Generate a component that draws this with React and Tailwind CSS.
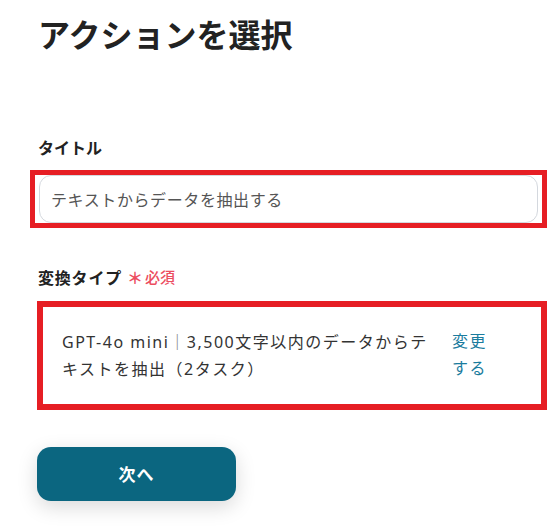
import React from 'react';

const App = () => {
    return (
        <div className="w-[559px] h-[528px] bg-white pl-[38px] pr-[12px] font-['Noto_Sans','Noto_Sans_CJK_JP',sans-serif] text-[#222]">
            {/* Heading */}
            <h1 className="pt-[9px] text-[32px] leading-[48px] font-bold font-['Noto_Sans_CJK_JP',sans-serif]">アクションを選択</h1>

            {/* Title field */}
            <div className="mt-[79px] text-[16px] leading-[22px] font-bold font-['Noto_Sans_CJK_JP',sans-serif]">タイトル</div>
            <div className="mt-[12px] -ml-[8px] border-[5px] border-[#e61e24] px-[4px]">
                <input
                    type="text"
                    defaultValue="テキストからデータを抽出する"
                    className="w-full h-[48px] rounded-[12px] border border-[#d4d8de] px-[11px] text-[16px] tracking-[0.6px] text-[#555] outline-none font-['Noto_Sans_CJK_JP',sans-serif]"
                />
            </div>

            {/* Conversion type */}
            <div className="mt-[38px] flex items-center gap-[5px] font-['Noto_Sans_CJK_JP',sans-serif]">
                <span className="text-[16px] leading-[22px] font-bold tracking-[0.8px]">変換タイプ</span>
                <span className="flex items-center gap-[2px] text-[15px] leading-[22px] text-[#ec4d5f] font-medium">
                    <span className="font-bold text-[16px]">＊</span>
                    <span>必須</span>
                </span>
            </div>
            <div className="mt-[13px] -ml-[1px] border-[6px] border-[#e61e24] pl-[19px] py-[21px] flex gap-[18px]">
                <p className="w-[372px] shrink-0 text-[16px] leading-[27px] tracking-[1.5px] text-[#333]">
                    GPT-4o mini<span className="font-['Noto_Sans_CJK_JP',sans-serif] text-[#777]">｜</span>3,500文字以内のデータからテキストを抽出（2タスク）
                </p>
                <a href="#" className="w-[40px] shrink-0 text-[16px] leading-[27px] tracking-[1.5px] text-[#1b7c9e]">変更する</a>
            </div>

            {/* Next button */}
            <button className="mt-[37px] -ml-[1px] w-[199px] h-[54px] rounded-[14px] bg-[#0b6680] text-white text-[17px] tracking-[1px] font-bold shadow-[0_6px_20px_rgba(0,0,0,0.15)] font-['Noto_Sans_CJK_JP',sans-serif]">
                次へ
            </button>
        </div>
    );
};

export default App;
